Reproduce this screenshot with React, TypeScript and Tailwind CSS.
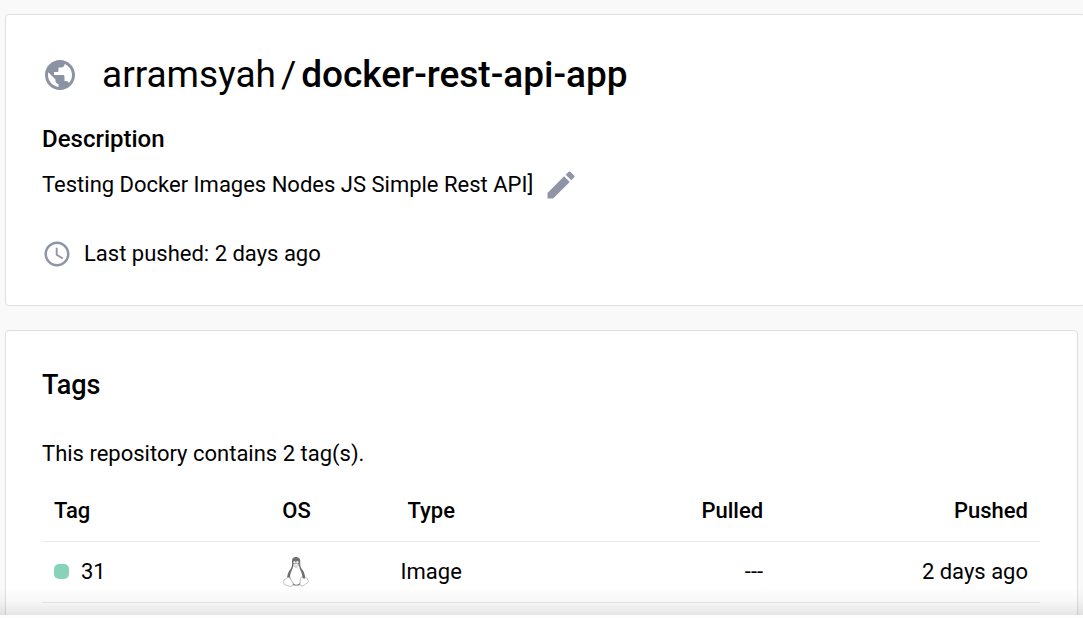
import React from "react";
import { MdAccessTime, MdEdit, MdPublic } from "react-icons/md";

type Tag = { name: string; type: string; pulled: string; pushed: string };

const tags: Tag[] = [
  { name: "31", type: "Image", pulled: "---", pushed: "2 days ago" },
];

function LinuxIcon() {
  return (
    <svg viewBox="0 0 26 32" role="img" aria-label="Linux" className="mx-auto block h-8 w-[26px]">
      <path
        d="M13 1C10.4 1 9 2.600 9 5c0 2.600.3 4.200-.4 6.100-.9 2.300-2.900 4.100-3.700 6.600-.6 1.900-.9 3.700-.8 5.300l6.700 6.500h5l6.200-6.500c.4-3.100-.7-6.300-2.400-8.900-1.400-2.200-2.300-3.500-2.400-5.400-.1-1.500.1-3 0-4.400C17 2.300 15.400 1 13 1z"
        fill="#6e6e6e"
      />
      <path
        d="M10.500 9.500c-.3 2.800-2.900 6.200-3.400 9.800-.3 2.600 1.400 6.400 3.600 8.400 1.600 1.300 3.900 1.200 5.400 0 2.200-1.800 3.500-4.900 3.200-7.700-.3-3.600-2.900-6.800-3.300-10.400z"
        fill="#fff"
      />
      <ellipse cx="11.500" cy="6.300" rx="1.100" ry="1.400" fill="#e8e8e8" />
      <ellipse cx="14.400" cy="6.300" rx="1.200" ry="1.500" fill="#e8e8e8" />
      <path d="M10.200 8.400 13 7.200l3 1.300c-.3 1.700-1.700 2.900-3 2.900s-2.500-1.300-2.800-3z" fill="#e6e6e6" stroke="#a8a8a8" strokeWidth=".5" />
      <path
        d="M5.300 21.300c1.300 0 2.600 2.200 3.900 4.200 1 1.500 1.400 3.100.2 4.300-1.600 1.500-5.300-.5-7.800-1.100C.3 28.300 1 26.900.8 25.400c-.2-1.200-.1-1.700 1-1.900 1.700-.2 2-2.200 3.500-2.200z"
        fill="#fff"
        stroke="#a3a3a3"
        strokeWidth=".7"
      />
      <path
        d="M17.600 22.300c.4-1.600 1.200-1.300 2-.5 1.100 1 2.400.7 3.300-.3.900-.7 1.300.5 1.400 1.600.2 1.300 1.200 1.700 1.200 2.500 0 1.200-2.600 1.800-4 3.300-1.500 1.500-3.600 1.700-4.300-.1-.5-1.900.2-4.300.4-6.500z"
        fill="#fff"
        stroke="#a3a3a3"
        strokeWidth=".7"
      />
    </svg>
  );
}

function RepositoryCard() {
  return (
    <section className="-mr-2 rounded border border-[#dfdfdf] bg-white px-9 pt-8 pb-[33px]">
      <div className="flex items-center gap-6">
        <MdPublic className="size-9 shrink-0 text-[#8b92a4]" aria-hidden="true" />
        <h1 className="flex gap-[5px] text-[37px] leading-14">
          <span>arramsyah</span> <span>/</span>{" "}
          <span className="font-medium">docker-rest-api-app</span>
        </h1>
      </div>
      <h2 className="mt-5 text-2xl leading-8 font-medium">Description</h2>
      <div className="mt-3 flex items-center gap-[10px]">
        <p className="text-[22px] leading-9">Testing Docker Images Nodes JS Simple Rest API]</p>
        <button type="button" aria-label="Edit description" className="text-[#8f94a7]">
          <MdEdit className="size-9" />
        </button>
      </div>
      <div className="mt-[33px] flex items-center gap-3">
        <MdAccessTime className="size-[30px] text-[#8f94a7]" aria-hidden="true" />
        <p className="text-[22px] leading-9">Last pushed: 2 days ago</p>
      </div>
    </section>
  );
}

function TagsCard() {
  return (
    <section className="rounded border border-[#dfdfdf] bg-white py-9 pr-[37px] pl-9">
      <h2 className="text-[27px] leading-9 font-medium">Tags</h2>
      <p className="mt-[33px] text-[22px] leading-9">This repository contains 2 tag(s).</p>
      <table className="mt-2 w-full table-fixed border-collapse text-[22px] leading-9">
        <colgroup>
          <col className="w-[19%]" />
          <col className="w-[13%]" />
          <col className="w-[14%]" />
          <col className="w-[274px]" />
          <col />
        </colgroup>
        <thead>
          <tr className="h-[61px] border-b border-[#ececec] *:px-3 *:pt-0.5 *:font-medium">
            <th scope="col" className="text-left">Tag</th>
            <th scope="col" className="text-center">OS</th>
            <th scope="col" className="text-center">Type</th>
            <th scope="col" className="text-right">Pulled</th>
            <th scope="col" className="text-right">Pushed</th>
          </tr>
        </thead>
        <tbody>
          {tags.map((tag) => (
            <tr key={tag.name} className="h-[61px] border-b border-[#ececec]">
              <td className="px-3">
                <span className="flex items-center gap-3">
                  <span className="size-[15px] rounded-[5px] bg-[#86d3b9]" />
                  {tag.name}
                </span>
              </td>
              <td className="px-3"><LinuxIcon /></td>
              <td className="px-3 text-center">{tag.type}</td>
              <td className="px-3 text-right">{tag.pulled}</td>
              <td className="px-3 text-right">{tag.pushed}</td>
            </tr>
          ))}
        </tbody>
      </table>
    </section>
  );
}

export default function App() {
  return (
    <div className="flex h-screen flex-col overflow-hidden bg-[#f9f9f9] font-[Roboto,sans-serif] text-black">
      <main className="flex min-h-0 flex-1 flex-col gap-6 overflow-hidden pt-[14px] pr-[5px] pl-[5px] *:shrink-0">
        <RepositoryCard />
        <TagsCard />
      </main>
      <footer className="relative h-[3px] shrink-0 bg-[#fdfdfd]">
        <div className="pointer-events-none absolute inset-x-0 bottom-full h-7 bg-linear-to-t from-black/10 via-black/3 to-transparent" />
      </footer>
    </div>
  );
}
